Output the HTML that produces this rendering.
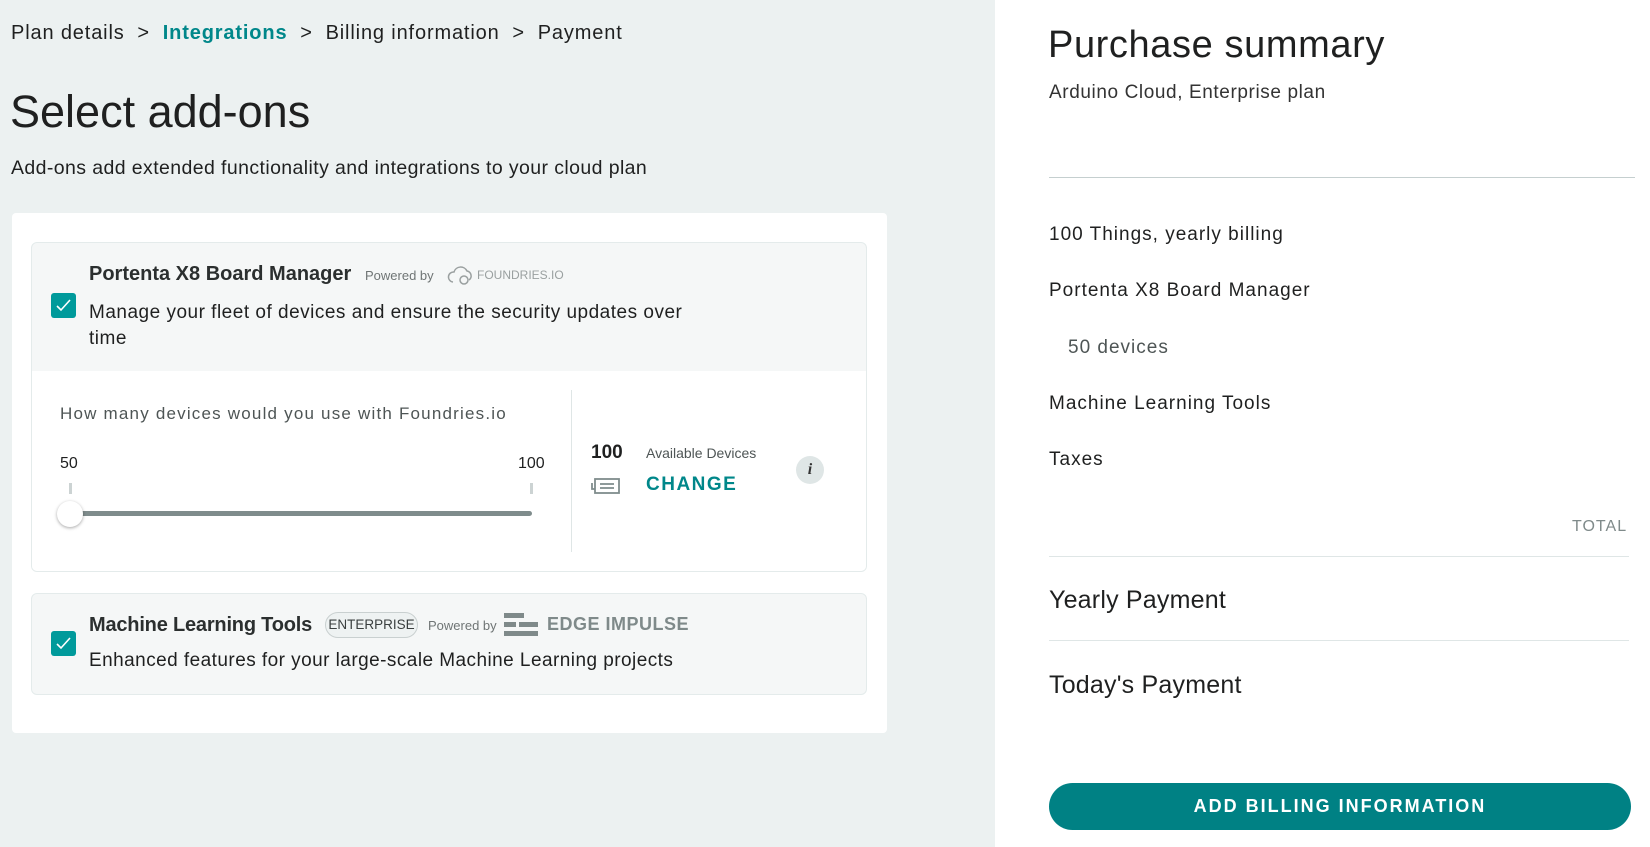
<!DOCTYPE html>
<html><head><meta charset="utf-8"><style>
*{margin:0;padding:0;box-sizing:border-box}
body{width:1650px;height:847px;position:relative;overflow:hidden;font-family:"Liberation Sans",sans-serif;color:#1f2020;background:#fff}
.a{position:absolute;white-space:nowrap}
#left{position:absolute;left:0;top:0;width:995px;height:847px;background:#ecf1f1}
.card{position:absolute;left:12px;top:213px;width:875px;height:520px;background:#fff;border-radius:4px}
.box{position:absolute;left:31px;width:836px;border:1px solid #e4ebeb;border-radius:6px;background:#f5f7f7;overflow:hidden}
.cb{position:absolute;width:25px;height:25px;background:#009a9b;border-radius:3px}
.cb svg{position:absolute;left:5px;top:6px}
.r{position:absolute;left:1049px;font-size:19px;letter-spacing:1px;color:#1f2020}
</style></head><body>
<div id="left">
<div class="a" style="left:11px;top:22px;font-size:20px;letter-spacing:.85px">Plan details &nbsp;&gt;&nbsp; <b style="color:#00878a">Integrations</b> &nbsp;&gt;&nbsp; Billing information &nbsp;&gt;&nbsp; Payment</div>
<div class="a" style="left:10px;top:86px;font-size:45px;letter-spacing:0">Select add-ons</div>
<div class="a" style="left:11px;top:157px;font-size:19.5px;letter-spacing:.4px">Add-ons add extended functionality and integrations to your cloud plan</div>
<div class="card"></div>
<div class="box" style="top:242px;height:330px">
 <div style="position:absolute;left:0;top:128px;width:100%;height:202px;background:#fff"></div>
 <div style="position:absolute;left:539px;top:147px;width:1px;height:162px;background:#dfe6e6"></div>
</div>
<div class="cb" style="left:51px;top:293px"><svg width="15" height="13" viewBox="0 0 15 13"><path d="M1 7l4 4 9-10" stroke="#fff" stroke-width="1.6" fill="none"/></svg></div>
<div class="a" style="left:89px;top:263px;font-size:20px;font-weight:bold;color:#2b2f2f">Portenta X8 Board Manager</div>
<div class="a" style="left:365px;top:268px;font-size:13px;color:#6f7575">Powered by</div>
<svg class="a" style="left:447px;top:264px" width="28" height="22" viewBox="0 0 28 22"><path d="M6 18a5 5 0 0 1 1-10 7 7 0 0 1 13-1 5 5 0 0 1 2 9" stroke="#9aa0a0" stroke-width="1.5" fill="none"/><circle cx="17" cy="16" r="4" stroke="#9aa0a0" stroke-width="1.5" fill="none"/></svg>
<div class="a" style="left:477px;top:268px;font-size:12px;color:#9aa0a0">FOUNDRIES.IO</div>
<div class="a" style="left:89px;top:300px;font-size:19px;line-height:26px;letter-spacing:.5px">Manage your fleet of devices and ensure the security updates over<br>time</div>
<div class="a" style="left:60px;top:404px;font-size:17px;color:#4e5555;letter-spacing:1.2px">How many devices would you use with Foundries.io</div>
<div class="a" style="left:60px;top:455px;font-size:16px">50</div>
<div class="a" style="left:518px;top:455px;font-size:16px">100</div>
<div class="a" style="left:69px;top:483px;width:3px;height:11px;background:#ccd3d3"></div>
<div class="a" style="left:530px;top:483px;width:3px;height:11px;background:#ccd3d3"></div>
<div class="a" style="left:70px;top:511px;width:462px;height:5px;background:#7f8c8c;border-radius:3px"></div>
<div class="a" style="left:57px;top:501px;width:26px;height:26px;border-radius:50%;background:#fff;box-shadow:0 1px 3px rgba(0,0,0,.35)"></div>
<div class="a" style="left:591px;top:442px;font-size:19px;font-weight:bold">100</div>
<div class="a" style="left:646px;top:445px;font-size:14px;color:#4e5555">Available Devices</div>
<svg class="a" style="left:591px;top:477px" width="30" height="18" viewBox="0 0 30 18"><rect x="4" y="2" width="24" height="14" stroke="#7f8c8c" stroke-width="1.8" fill="none"/><path d="M1 6v6h3M9 7h14M9 11h14" stroke="#7f8c8c" stroke-width="1.8" fill="none"/></svg>
<div class="a" style="left:646px;top:474px;font-size:19px;font-weight:bold;color:#00878a;letter-spacing:1.5px">CHANGE</div>
<div class="a" style="left:796px;top:456px;width:28px;height:28px;border-radius:50%;background:#dfe6e6;font:italic bold 16px 'Liberation Serif',serif;color:#333;text-align:center;line-height:28px">i</div>
<div class="box" style="top:593px;height:102px"></div>
<div class="cb" style="left:51px;top:631px"><svg width="15" height="13" viewBox="0 0 15 13"><path d="M1 7l4 4 9-10" stroke="#fff" stroke-width="1.6" fill="none"/></svg></div>
<div class="a" style="left:89px;top:614px;font-size:20px;font-weight:bold;color:#2b2f2f;letter-spacing:-.2px">Machine Learning Tools</div>
<div class="a" style="left:325px;top:612px;height:26px;width:93px;border:1px solid #c9d0d0;border-radius:13px;background:#eef2f2;font-size:13.5px;line-height:24px;color:#3a3f3f;text-align:center">ENTERPRISE</div>
<div class="a" style="left:428px;top:618px;font-size:13px;color:#6f7575">Powered by</div>
<svg class="a" style="left:504px;top:612px" width="34" height="26" viewBox="0 0 34 26"><rect x="0" y="1" width="20" height="5" fill="#7f8a8a"/><rect x="0" y="10" width="12" height="5" fill="#7f8a8a"/><rect x="15" y="10" width="19" height="5" fill="#7f8a8a"/><rect x="0" y="19" width="34" height="5" fill="#7f8a8a"/></svg>
<div class="a" style="left:547px;top:614px;font-size:18px;font-weight:bold;color:#7f8a8a;letter-spacing:.5px">EDGE IMPULSE</div>
<div class="a" style="left:89px;top:650px;font-size:19px;letter-spacing:.45px">Enhanced features for your large-scale Machine Learning projects</div>
</div>
<div class="a" style="left:1048px;top:24px;font-size:38px;letter-spacing:.6px">Purchase summary</div>
<div class="a" style="left:1049px;top:82px;font-size:19px;letter-spacing:.6px;color:#333">Arduino Cloud, Enterprise plan</div>
<div class="a" style="left:1049px;top:177px;width:586px;height:1px;background:#c5cfcf"></div>
<div class="r a" style="top:224px">100 Things, yearly billing</div>
<div class="r a" style="top:280px">Portenta X8 Board Manager</div>
<div class="r a" style="top:337px;left:1068px;color:#4e5555">50 devices</div>
<div class="r a" style="top:393px">Machine Learning Tools</div>
<div class="r a" style="top:449px">Taxes</div>
<div class="a" style="left:1572px;top:518px;font-size:16px;letter-spacing:1px;color:#7f8a8a">TOTAL</div>
<div class="a" style="left:1049px;top:556px;width:580px;height:1px;background:#dfe6e6"></div>
<div class="a" style="left:1049px;top:586px;font-size:25px;letter-spacing:.2px">Yearly Payment</div>
<div class="a" style="left:1049px;top:640px;width:580px;height:1px;background:#dfe6e6"></div>
<div class="a" style="left:1049px;top:671px;font-size:25px;letter-spacing:.2px">Today's Payment</div>
<div class="a" style="left:1049px;top:783px;width:582px;height:47px;border-radius:24px;background:#008184;color:#fff;font-size:18px;font-weight:bold;letter-spacing:2px;text-align:center;line-height:47px">ADD BILLING INFORMATION</div>
</body></html>
